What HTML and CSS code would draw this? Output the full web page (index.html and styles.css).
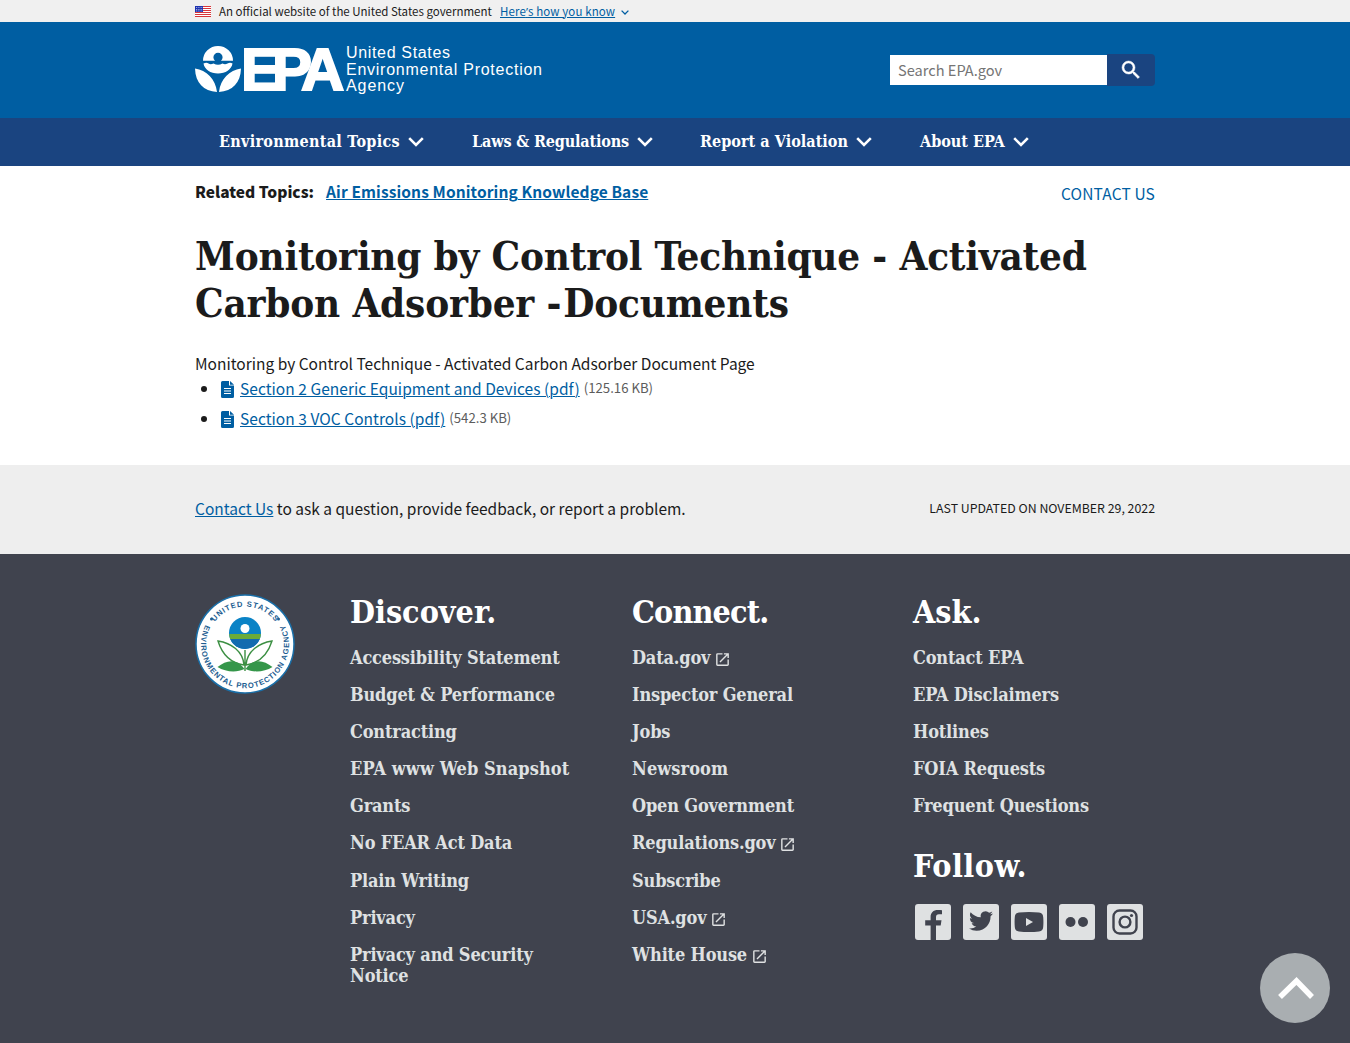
FILE: index.html
```html
<!DOCTYPE html>
<html lang="en">
<head>
<meta charset="utf-8">
<title>Monitoring by Control Technique - Activated Carbon Adsorber - Documents | US EPA</title>
<link rel="stylesheet" href="styles.css">
</head>
<body>
<svg class="defs" aria-hidden="true">
  <symbol id="chev" viewBox="0 0 16 10"><path d="M1.2 1.2 8 8l6.8-6.8" fill="none" stroke="currentColor" stroke-width="2.600"/></symbol>
  <symbol id="ext" viewBox="0 0 24 24"><path fill="currentColor" d="M19 19H5V5h7V3H5a2 2 0 0 0-2 2v14a2 2 0 0 0 2 2h14c1.100 0 2-.9 2-2v-7h-2v7zM14 3v2h3.590l-9.830 9.830 1.410 1.410L19 6.410V10h2V3h-7z"/></symbol>
  <symbol id="doc" viewBox="0 0 13 17"><path fill="currentColor" d="M1.500 0H8v4.500h5V15.500A1.500 1.500 0 0 1 11.500 17h-10A1.500 1.500 0 0 1 0 15.500v-14A1.500 1.500 0 0 1 1.500 0zM9 0l4 3.700H9z"/><path d="M3 7.500h7M3 10h7M3 12.500h7" stroke="#fff" stroke-width="1.100"/></symbol>
</svg>

<div class="banner"><div class="wrap">
  <svg class="flag" viewBox="0 0 16 11"><path fill="#fff" d="M0 0h16v11H0z"/><path d="M0 .5h16M0 2.500h16M0 4.500h16M0 6.500h16M0 8.500h16M0 10.500h16" stroke="#d8353a"/><path fill="#1d33b1" d="M0 0h8v6H0z"/><path d="M1 1.500h7M1 3.500h7M1 5h7" stroke="#fff" stroke-width=".7" stroke-dasharray=".8 1"/></svg>
  <span class="official">An official website of the United States government</span>
  <a class="know" href="#">Here<span class="apos">’</span>s how you know</a>
  <svg class="chev-s"><use href="#chev"/></svg>
</div></div>

<header class="header"><div class="wrap">
  <svg class="logo" viewBox="0 0 348 50" role="img" aria-label="US EPA">
    <g fill="#fff">
      <path d="M8 14.800a15 14.800 0 0 1 30 0H26a4.600 4.600 0 1 0-6 0z"/>
      <path d="M8.500 17.500q3-1.500 5 0t5 0q4.500 2.500 9 0 2.500 1.500 5 0t5 0C36.500 23.500 30.500 27.500 23 27.500S9.500 23.500 8.500 17.500z"/>
      <path d="M0 22.500c11.500 2 20.500 10 22 23.500C8.500 45 .500 37 0 22.500zM46 22.500c-11.500 2-20.500 10-22 23.500 13.500-1 21.500-9 22-23.500z"/>
    </g>
    <text class="epa" y="44"><tspan x="46">E</tspan><tspan x="77">P</tspan><tspan x="106">A</tspan></text>
    <g class="agency"><text x="151" y="12" textLength="104">United States</text><text x="151" y="28.500" textLength="196">Environmental Protection</text><text x="151" y="45" textLength="58">Agency</text></g>
  </svg>
  <form class="search"><input type="text" placeholder="Search EPA.gov" aria-label="Search"><button type="button" aria-label="Search"><svg viewBox="0 0 24 24"><path fill="#fff" stroke="#fff" stroke-width=".5" d="M15.500 14h-.79l-.28-.27A6.471 6.471 0 0 0 16 9.500 6.500 6.500 0 1 0 9.500 16c1.610 0 3.090-.59 4.230-1.570l.27.280v.79l5 4.990L20.490 19l-4.990-5zm-6 0C7.010 14 5 11.990 5 9.500S7.010 5 9.500 5 14 7.010 14 9.500 11.990 14 9.500 14z"/></svg></button></form>
</div></header>

<nav class="nav"><div class="wrap">
  <a href="#" class="n1"><span>Environmental Topics</span><svg><use href="#chev"/></svg></a>
  <a href="#" class="n2"><span>Laws &amp; Regulations</span><svg><use href="#chev"/></svg></a>
  <a href="#" class="n3"><span>Report a Violation</span><svg><use href="#chev"/></svg></a>
  <a href="#" class="n4"><span>About EPA</span><svg><use href="#chev"/></svg></a>
</div></nav>

<main class="main wrap">
  <div class="related"><div class="topics"><b>Related Topics:</b><a href="#">Air Emissions Monitoring Knowledge Base</a></div><a class="contact" href="#">CONTACT US</a></div>
  <h1>Monitoring by Control Technique - Activated<br>Carbon Adsorber <span class="dash">-</span>Documents</h1>
  <p class="intro">Monitoring by Control Technique - Activated Carbon Adsorber Document Page</p>
  <ul class="docs">
    <li><svg><use href="#doc"/></svg><a href="#">Section 2 Generic Equipment and Devices (pdf)</a><small>(125.16 KB)</small></li>
    <li><svg><use href="#doc"/></svg><a href="#">Section 3 VOC Controls (pdf)</a><small>(542.3 KB)</small></li>
  </ul>
</main>

<section class="feedback"><div class="wrap"><span class="ask"><a href="#">Contact Us</a> to ask a question, provide feedback, or report a problem.</span><span class="updated">LAST UPDATED ON NOVEMBER 29, 2022</span></div></section>

<footer class="footer"><div class="wrap">
  <svg class="seal" viewBox="0 0 100 100" role="img" aria-label="EPA seal">
    <defs><path id="arcTop" d="M12.500 50a37.500 37.500 0 0 1 75 0"/><path id="arcBottom" d="M13.400 25.800A44 44 0 1 0 86.600 25.800"/></defs>
    <circle cx="50" cy="50" r="49" fill="#fff" stroke="#1a6fa8" stroke-width="1.500"/>
    <text class="ring"><textPath href="#arcTop" startOffset="50%" text-anchor="middle" textLength="70">UNITED STATES</textPath></text>
    <text class="ring"><textPath href="#arcBottom" startOffset="50%" text-anchor="middle" textLength="178">ENVIRONMENTAL PROTECTION AGENCY</textPath></text>
    <circle cx="16.500" cy="25" r="1.500" fill="#1d5d91"/><circle cx="83.500" cy="25" r="1.500" fill="#1d5d91"/>
    <circle cx="50" cy="39" r="16" fill="#0a83c6"/>
    <path d="M34.200 40h31.600a16 16 0 0 1-1 5H35.200a16 16 0 0 1-1-5z" fill="#6bab3a"/><path d="M35.200 45h29.600A16 16 0 0 1 50 55a16 16 0 0 1-14.800-10z" fill="#126baf"/>
    <circle cx="50" cy="34.500" r="4.500" fill="#fff"/>
    <g fill="none" stroke="#3c8f43" stroke-width="1.400"><path d="M49 71C36 69 27 60 23 47c13 2 25 10 26 24zM51 71c13-2 22-11 26-24-13 2-25 10-26 24zM50 56v21"/></g>
    <path fill="#35964a" d="M49.500 75c-8-11-18-9-27-2 8 5 19 6 27 2zM50.500 75c8-11 18-9 27-2-8 5-19 6-27 2z"/>
  </svg>
  <div class="col">
    <h2>Discover.</h2>
    <ul><li><a href="#">Accessibility Statement</a></li><li><a href="#">Budget &amp; Performance</a></li><li><a href="#">Contracting</a></li><li class="snap"><a href="#">EPA www Web Snapshot</a></li><li><a href="#">Grants</a></li><li><a href="#">No FEAR Act Data</a></li><li><a href="#">Plain Writing</a></li><li><a href="#">Privacy</a></li><li><a href="#">Privacy and Security<br>Notice</a></li></ul>
  </div>
  <div class="col">
    <h2 class="connect">Connect.</h2>
    <ul><li><a href="#">Data.gov</a><svg><use href="#ext"/></svg></li><li><a href="#">Inspector General</a></li><li><a href="#">Jobs</a></li><li class="news"><a href="#">Newsroom</a></li><li><a href="#">Open Government</a></li><li><a href="#">Regulations.gov</a><svg><use href="#ext"/></svg></li><li><a href="#">Subscribe</a></li><li><a href="#">USA.gov</a><svg><use href="#ext"/></svg></li><li><a href="#">White House</a><svg><use href="#ext"/></svg></li></ul>
  </div>
  <div class="col">
    <h2>Ask.</h2>
    <ul><li><a href="#">Contact EPA</a></li><li><a href="#">EPA Disclaimers</a></li><li><a href="#">Hotlines</a></li><li><a href="#">FOIA Requests</a></li><li><a href="#">Frequent Questions</a></li></ul>
    <h2 class="follow">Follow.</h2>
    <div class="social">
      <svg viewBox="0 0 36 36"><path fill="#dfe1e2" d="M3 0h30a3 3 0 0 1 3 3v30a3 3 0 0 1-3 3H21V21.500h4.700l.8-5.200H21v-3c0-2 .8-3 3-3h3V6.200C26 6 24.500 6 23 6c-4.800 0-7.400 2.700-7.400 7.200v3.100h-5.400v5.200h5.400V36H3a3 3 0 0 1-3-3V3a3 3 0 0 1 3-3z"/></svg>
      <svg viewBox="0 0 36 36"><rect width="36" height="36" rx="3" fill="#dfe1e2"/><path fill="#40434e" transform="translate(6 5)" d="M23.950 4.570a10 10 0 0 1-2.820.77 4.960 4.960 0 0 0 2.160-2.720c-.95.560-2 .96-3.130 1.180a4.920 4.920 0 0 0-8.380 4.480C7.690 8.100 4.070 6.130 1.640 3.160a4.820 4.820 0 0 0-.67 2.480c0 1.710.87 3.210 2.190 4.100a4.900 4.900 0 0 1-2.230-.62v.06a4.920 4.920 0 0 0 3.950 4.830 5 5 0 0 1-2.210.08 4.940 4.940 0 0 0 4.600 3.420A9.870 9.870 0 0 1 0 19.540a13.990 13.990 0 0 0 7.560 2.210c9.050 0 14-7.500 14-13.980 0-.21 0-.42-.02-.63a9.940 9.940 0 0 0 2.410-2.570z"/></svg>
      <svg viewBox="0 0 36 36"><rect width="36" height="36" rx="3" fill="#dfe1e2"/><path fill="#40434e" fill-rule="evenodd" d="M8 8.500c6-.8 14-.8 20 0 3 .3 4 2 4.200 4.500.3 3.500.3 6.500 0 10-.2 2.500-1.200 4.200-4.200 4.500-6 .8-14 .8-20 0-3-.3-4-2-4.200-4.500-.3-3.500-.3-6.500 0-10C4 10.500 5 8.800 8 8.500zM15 14v8l7-4z"/></svg>
      <svg viewBox="0 0 36 36"><rect width="36" height="36" rx="3" fill="#dfe1e2"/><circle cx="11.500" cy="18" r="5" fill="#40434e"/><circle cx="24" cy="18" r="5" fill="#40434e"/></svg>
      <svg viewBox="0 0 36 36"><rect width="36" height="36" rx="3" fill="#dfe1e2"/><g fill="none" stroke="#40434e" stroke-width="2.400"><rect x="6.500" y="6.500" width="23" height="23" rx="6"/><circle cx="18" cy="18" r="5.400"/></g><circle cx="24.500" cy="11.500" r="1.600" fill="#40434e"/></svg>
    </div>
  </div>
</div></footer>
<a class="to-top" href="#" aria-label="Back to top"><svg viewBox="0 0 70 70"><path d="M20 44 36.500 28 52 44" fill="none" stroke="#fff" stroke-width="5.500"/></svg></a>
</body>
</html>
```
FILE: styles.css
```css
* { box-sizing: border-box; }
body { margin: 0; height: 1043px; overflow: hidden; background: #fff; color: #1b1b1b; font: 15.5px/26px "Noto Sans CJK SC", "Open Sans", sans-serif; }
a { color: #005ea2; text-decoration: underline; text-underline-offset: 1px; text-decoration-thickness: 1px; }
ul { margin: 0; padding: 0; }
svg { display: block; flex: none; }
.defs { display: none; }
.wrap { width: 960px; margin: 0 auto; }

.banner { height: 22px; background: #f0f0f0; font-size: 11.5px; line-height: 22px; }
.banner .wrap { display: flex; align-items: center; height: 22px; }
.flag { width: 16px; height: 11px; margin-right: 8px; }
.official { width: 281px; white-space: nowrap; }
.know { white-space: nowrap; letter-spacing: .11px; }
.apos { font-family: "Open Sans", sans-serif; }
.chev-s { width: 8px; height: 5px; margin: 2px 0 0 6px; color: #005ea2; }

.header { height: 96px; background: #005ea2; }
.header .wrap { display: flex; justify-content: space-between; padding-top: 24px; }
.logo { width: 348px; height: 50px; overflow: visible; }
.epa { font: bold 60px "Liberation Sans", sans-serif; fill: #fff; stroke: #fff; stroke-width: 2px; }
.agency { font: 16px "Liberation Sans", sans-serif; fill: #fff; }
.search { display: flex; height: 32px; width: 265px; margin-top: 8px; }
.search input { width: 217px; height: 30px; margin: 1px 0 0; padding: 0 8px 2px; border: 0; font: 14.6px "Noto Sans CJK SC", sans-serif; }
.search input::placeholder { color: #757575; }
.search button { width: 48px; height: 32px; padding: 0 0 0 12px; border: 0; border-radius: 0 4px 4px 0; background: #1a4480; }
.search svg { width: 24px; height: 24px; }

.nav { height: 48px; background: #1a4480; }
.nav .wrap { display: flex; padding-left: 24px; }
.nav a { display: flex; align-items: center; gap: 8px; height: 48px; color: #fff; text-decoration: none; font: bold 16px/48px "DejaVu Serif Condensed", "DejaVu Serif", serif; white-space: nowrap; }
.nav span { margin-top: -1px; }
.nav svg { width: 16px; height: 10px; }
.nav .n1 { width: 253px; letter-spacing: .29px; }
.nav .n2 { width: 228px; letter-spacing: -.15px; }
.nav .n3 { width: 220px; letter-spacing: .04px; }

.main { height: 299px; padding-top: 12px; }
.related { display: flex; justify-content: space-between; height: 54px; }
.topics { display: flex; gap: 12px; font-weight: bold; }
.topics a { letter-spacing: .11px; }
.contact { padding-top: 2px; text-decoration: none; letter-spacing: .15px; }
h1, h2 { margin: 0; font-family: "DejaVu Serif Condensed", "DejaVu Serif", serif; font-weight: bold; white-space: nowrap; }
h1 { height: 94px; font-size: 40px; line-height: 47px; letter-spacing: -.2px; }
.dash { margin-right: 2px; }
.intro { margin: 24px 0 0; line-height: 26px; }
.docs { padding-left: 25px; }
.docs li { height: 30px; line-height: 26px; padding-left: 1px; display: flex; position: relative; }
.docs li::before { content: ""; width: 6px; height: 6px; margin: 10px 14px 0 -20px; border-radius: 50%; background: #1b1b1b; }
.docs svg { width: 13px; height: 17px; margin: 5px 6px 0 0; color: #005ea2; }
.docs small { margin-left: 4px; font-size: 13.2px; color: #5c5c5c; }
.docs a { letter-spacing: .04px; }
.docs a, .docs small { margin-top: -1px; }

.feedback { height: 89px; background: #eee; }
.feedback .wrap { display: flex; justify-content: space-between; align-items: center; height: 86px; }
.updated { font-size: 12.35px; }

.footer { height: 489px; background: #40434e; color: #fff; }
.footer .wrap { display: grid; grid-template-columns: 155px 282px 281px 242px; align-items: start; padding-top: 40px; }
.seal { width: 100px; height: 100px; }
.ring { font: bold 7.6px "Liberation Sans", sans-serif; fill: #1d5d91; }
h2 { font-size: 32px; line-height: 36px; }
.connect { letter-spacing: -.85px; }
.col ul { padding-top: 17px; list-style: none; }
.col li { display: flex; align-items: flex-start; padding-bottom: 16px; font: bold 18px/21.1px "DejaVu Serif Condensed", "DejaVu Serif", serif; letter-spacing: -.17px; white-space: nowrap; }
.col .snap, .col .news { letter-spacing: .1px; }
.col li a { color: #dfe1e2; text-decoration: none; }
.col li svg { width: 17px; height: 17px; margin: 4px 0 0 4px; color: #dfe1e2; }
.follow { padding-top: 16px; letter-spacing: .5px; }
.social { display: flex; gap: 12px; padding: 20px 0 0 2px; }
.social svg { width: 36px; height: 36px; }

.to-top { position: fixed; right: 20px; bottom: 20px; width: 70px; height: 70px; border-radius: 50%; background: #a9aeb1; }
```
